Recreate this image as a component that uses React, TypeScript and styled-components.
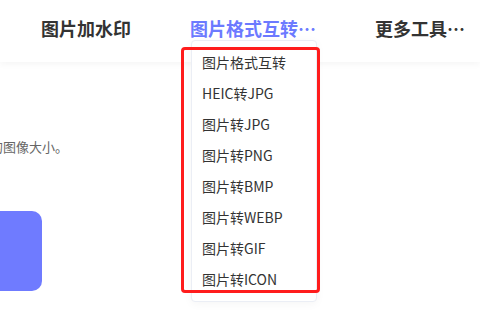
import React from "react";
import styled, { createGlobalStyle } from "styled-components";

const Global = createGlobalStyle`
  html, body { margin: 0; padding: 0; background: #fff; }
  body { font-family: "Noto Sans CJK SC", "Noto Sans", sans-serif; overflow: hidden; }
  * { box-sizing: border-box; }
`;

const Page = styled.div`
  width: 480px;
  height: 325px;
  position: relative;
  overflow: hidden;
  background: #fff;
`;

const Header = styled.header`
  height: 62px;
  background: #fff;
  display: flex;
  align-items: flex-start;
  padding: 16px 0 0 41px;
  gap: 59px;
  box-shadow: 0 3px 6px rgba(0, 0, 0, 0.035);
  position: relative;
  z-index: 1;
`;

const NavItem = styled.div<{ $active?: boolean }>`
  position: relative;
  font-size: 18px;
  line-height: 24px;
  font-weight: 700;
  white-space: nowrap;
  color: ${(p) => (p.$active ? "#6c7aff" : "#333")};
`;

const Menu = styled.ul`
  position: absolute;
  top: 100%;
  left: 1px;
  width: 126px;
  margin: 0;
  padding: 5px 0 7px;
  list-style: none;
  background: #fff;
  border: 1px solid #ebeef5;
  border-radius: 4px;
  box-shadow: 0 2px 10px rgba(0, 0, 0, 0.04);
  z-index: 5;
`;

const MenuItem = styled.li`
  height: 31px;
  display: flex;
  align-items: center;
  padding-left: 10px;
  font-size: 14px;
  font-weight: 400;
  color: #333;
`;

const Highlight = styled.div`
  position: absolute;
  left: -9px;
  top: 31px;
  width: 139px;
  height: 246px;
  border: 3px solid #ff1c1c;
  border-radius: 4px;
  z-index: 6;
  pointer-events: none;
`;

const Main = styled.main`
  display: flex;
  flex-direction: column;
  align-items: flex-start;
  padding-top: 76px;
  gap: 55px;
`;

const Desc = styled.p`
  margin: 0;
  width: 68px;
  overflow: hidden;
  display: flex;
  justify-content: flex-end;
  white-space: nowrap;
  font-size: 13px;
  line-height: 18px;
  color: #666;
`;

const UploadButton = styled.div`
  width: 42px;
  height: 80px;
  background: #6f7bff;
  border-radius: 0 10px 10px 0;
`;

const items = [
  "图片格式互转",
  "HEIC转JPG",
  "图片转JPG",
  "图片转PNG",
  "图片转BMP",
  "图片转WEBP",
  "图片转GIF",
  "图片转ICON",
];

export default function App() {
  return (
    <Page>
      <Global />
      <Header>
        <NavItem>图片加水印</NavItem>
        <NavItem $active>
          图片格式互转…
          <Menu>
            {items.map((t) => (
              <MenuItem key={t}>{t}</MenuItem>
            ))}
          </Menu>
          <Highlight />
        </NavItem>
        <NavItem>更多工具…</NavItem>
      </Header>
      <Main>
        <Desc>
          <span>轻松调整为您需要的图像大小。</span>
        </Desc>
        <UploadButton />
      </Main>
    </Page>
  );
}
